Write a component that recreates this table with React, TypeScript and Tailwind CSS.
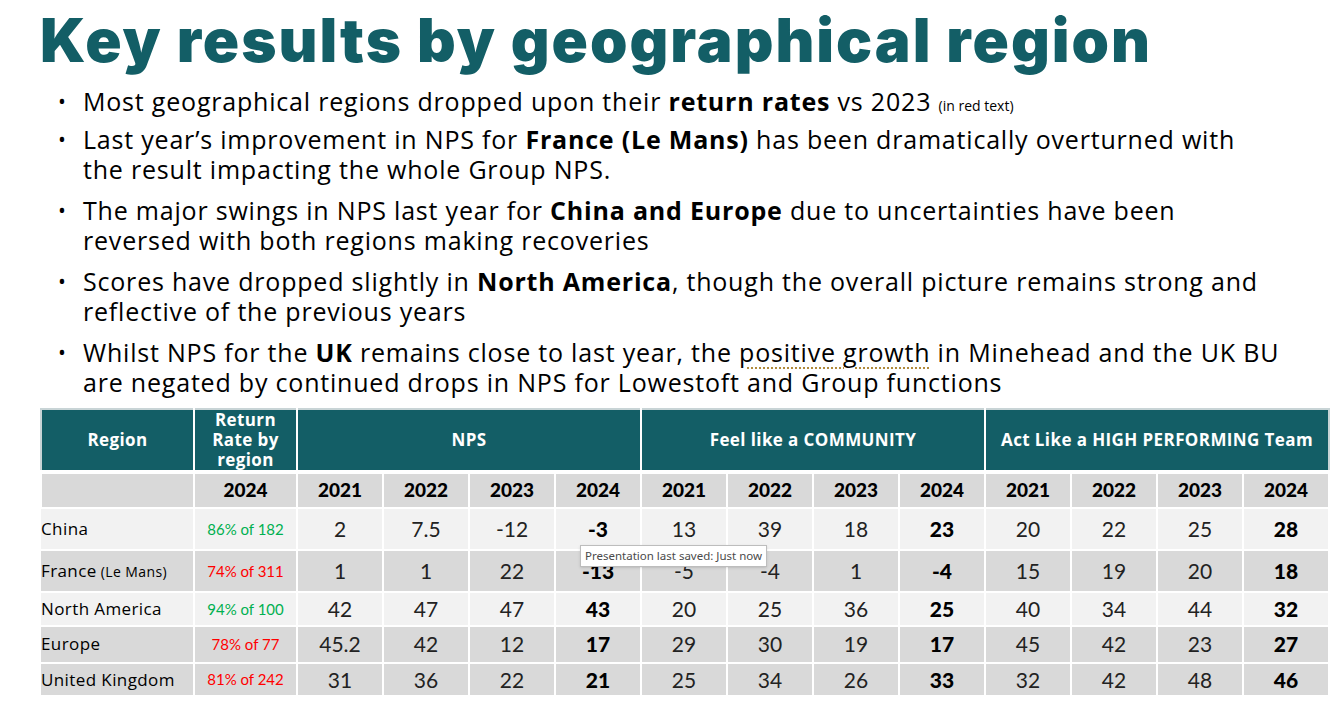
import React from 'react';

const rows = [
    { region: 'China', sub: '', rate: '86% of 182', good: true, bg: 'bg-[#f2f2f2]', h: 'h-[42px]', nps: ['2', '7.5', '-12', '-3'], com: ['13', '39', '18', '23'], team: ['20', '22', '25', '28'] },
    { region: 'France', sub: '(Le Mans)', rate: '74% of 311', good: false, bg: 'bg-[#d9d9d9]', h: 'h-[42px]', nps: ['1', '1', '22', '-13'], com: ['-5', '-4', '1', '-4'], team: ['15', '19', '20', '18'] },
    { region: 'North America', sub: '', rate: '94% of 100', good: true, bg: 'bg-[#f2f2f2]', h: 'h-[32px]', nps: ['42', '47', '47', '43'], com: ['20', '25', '36', '25'], team: ['40', '34', '44', '32'] },
    { region: 'Europe', sub: '', rate: '78% of 77', good: false, bg: 'bg-[#d9d9d9]', h: 'h-[37px]', nps: ['45.2', '42', '12', '17'], com: ['29', '30', '19', '17'], team: ['45', '42', '23', '27'] },
    { region: 'United Kingdom', sub: '', rate: '81% of 242', good: false, bg: 'bg-[#d9d9d9]', h: 'h-[33px]', nps: ['31', '36', '22', '21'], com: ['25', '34', '26', '33'], team: ['32', '42', '48', '46'] },
];

const years = ['2021', '2022', '2023', '2024'];

function Bullet({ children, className = '' }: { children: React.ReactNode; className?: string }) {
    return (
        <li className={`flex ${className}`}>
            <span className="w-[43px] shrink-0 pl-[18px] text-[21px]">•</span>
            <span>{children}</span>
        </li>
    );
}

export default function App() {
    return (
        <div className="w-[1333px] h-[703px] bg-white overflow-hidden relative font-['Open_Sans',sans-serif] text-black">
            <h1 className="pl-[40px] pt-[4px] text-[60px] leading-[72px] font-black text-[#135e66] tracking-[2px] font-['Inter',sans-serif]">
                Key results by geographical region
            </h1>

            <ul className="pl-[40px] mt-[10px] text-[25px] leading-[30px] tracking-[0.8px]">
                <Bullet className="mb-[8px]">
                    Most geographical regions dropped upon their <b className="font-bold">return rates</b> vs 2023{' '}
                    <span className="text-[14px] leading-[0] tracking-normal">(in red text)</span>
                </Bullet>
                <Bullet className="mb-[11px]">
                    Last year’s improvement in NPS for <b className="font-bold">France (Le Mans)</b> has been dramatically overturned with
                    <br />
                    the result impacting the whole Group NPS.
                </Bullet>
                <Bullet className="mb-[11px]">
                    The major swings in NPS last year for <b className="font-bold">China and Europe</b> due to uncertainties have been
                    <br />
                    reversed with both regions making recoveries
                </Bullet>
                <Bullet className="mb-[11px]">
                    Scores have dropped slightly in <b className="font-bold">North America</b>, though the overall picture remains strong and
                    <br />
                    reflective of the previous years
                </Bullet>
                <Bullet>
                    Whilst NPS for the <b className="font-bold">UK</b> remains close to last year, the{' '}
                    <span className="underline decoration-dotted decoration-[#b08a3c] decoration-2 underline-offset-[5px]">positive growth</span> in Minehead and the UK BU
                    <br />
                    are negated by continued drops in NPS for Lowestoft and Group functions
                </Bullet>
            </ul>

            <div className="absolute left-[40px] top-[408px]">
                <table className="table-fixed border-collapse w-[1288px]">
                    <colgroup>
                        <col className="w-[153px]" />
                        <col className="w-[103px]" />
                        {Array.from({ length: 12 }).map((_, i) => (
                            <col key={i} className="w-[86px]" />
                        ))}
                    </colgroup>
                    <thead>
                        <tr className="h-[60px] bg-[#135e66] text-white text-[17px] font-bold leading-[20px] tracking-[0.4px]">
                            <th className="border-2 border-white border-t-[#c8d4d6] border-l-[#c8d4d6]">Region</th>
                            <th className="border-2 border-white border-t-[#c8d4d6]">
                                Return
                                <br />
                                Rate by
                                <br />
                                region
                            </th>
                            <th colSpan={4} className="border-2 border-white border-t-[#c8d4d6]">NPS</th>
                            <th colSpan={4} className="border-2 border-white border-t-[#c8d4d6]">Feel like a COMMUNITY</th>
                            <th colSpan={4} className="border-2 border-white border-t-[#c8d4d6] border-r-[#c8d4d6] whitespace-nowrap">Act Like a HIGH PERFORMING Team</th>
                        </tr>
                    </thead>
                    <tbody className="font-['Lato',sans-serif]">
                        <tr className="h-[36px] bg-[#d9d9d9] text-[19px] font-black border-t-4 border-white">
                            <td className="border-2 border-white"></td>
                            <td className="border-2 border-white text-center">2024</td>
                            {[0, 1, 2].flatMap((g) =>
                                years.map((y) => (
                                    <td key={g + y} className="border-2 border-white text-center">
                                        {y}
                                    </td>
                                ))
                            )}
                        </tr>
                        {rows.map((r) => (
                            <tr key={r.region} className={`${r.bg} ${r.h}`}>
                                <td className="border-2 border-white border-l-0 text-[17px] whitespace-nowrap font-['Open_Sans',sans-serif] tracking-[0.4px]">
                                    {r.region}
                                    {r.sub && <span className="text-[14px]"> {r.sub}</span>}
                                </td>
                                <td className={`border-2 border-white text-center text-[15px] ${r.good ? 'text-[#00b050]' : 'text-[#ff0000]'}`}>
                                    {r.rate}
                                </td>
                                {[r.nps, r.com, r.team].flatMap((vals, g) =>
                                    vals.map((v, i) => (
                                        <td
                                            key={g + '-' + i}
                                            className={`border-2 border-white text-center text-[21px] ${i === 3 ? 'font-black text-black' : 'font-normal text-[#222]'}`}
                                        >
                                            {v}
                                        </td>
                                    ))
                                )}
                            </tr>
                        ))}
                    </tbody>
                </table>

                <div className="absolute left-[540px] top-[137px] bg-white border border-[#bdbdbd] shadow-sm px-[4px] h-[22px] flex items-center text-[11.5px] text-[#4a4a4a] font-['Noto_Sans',sans-serif] whitespace-nowrap">
                    Presentation last saved: Just now
                </div>
            </div>
        </div>
    );
}
